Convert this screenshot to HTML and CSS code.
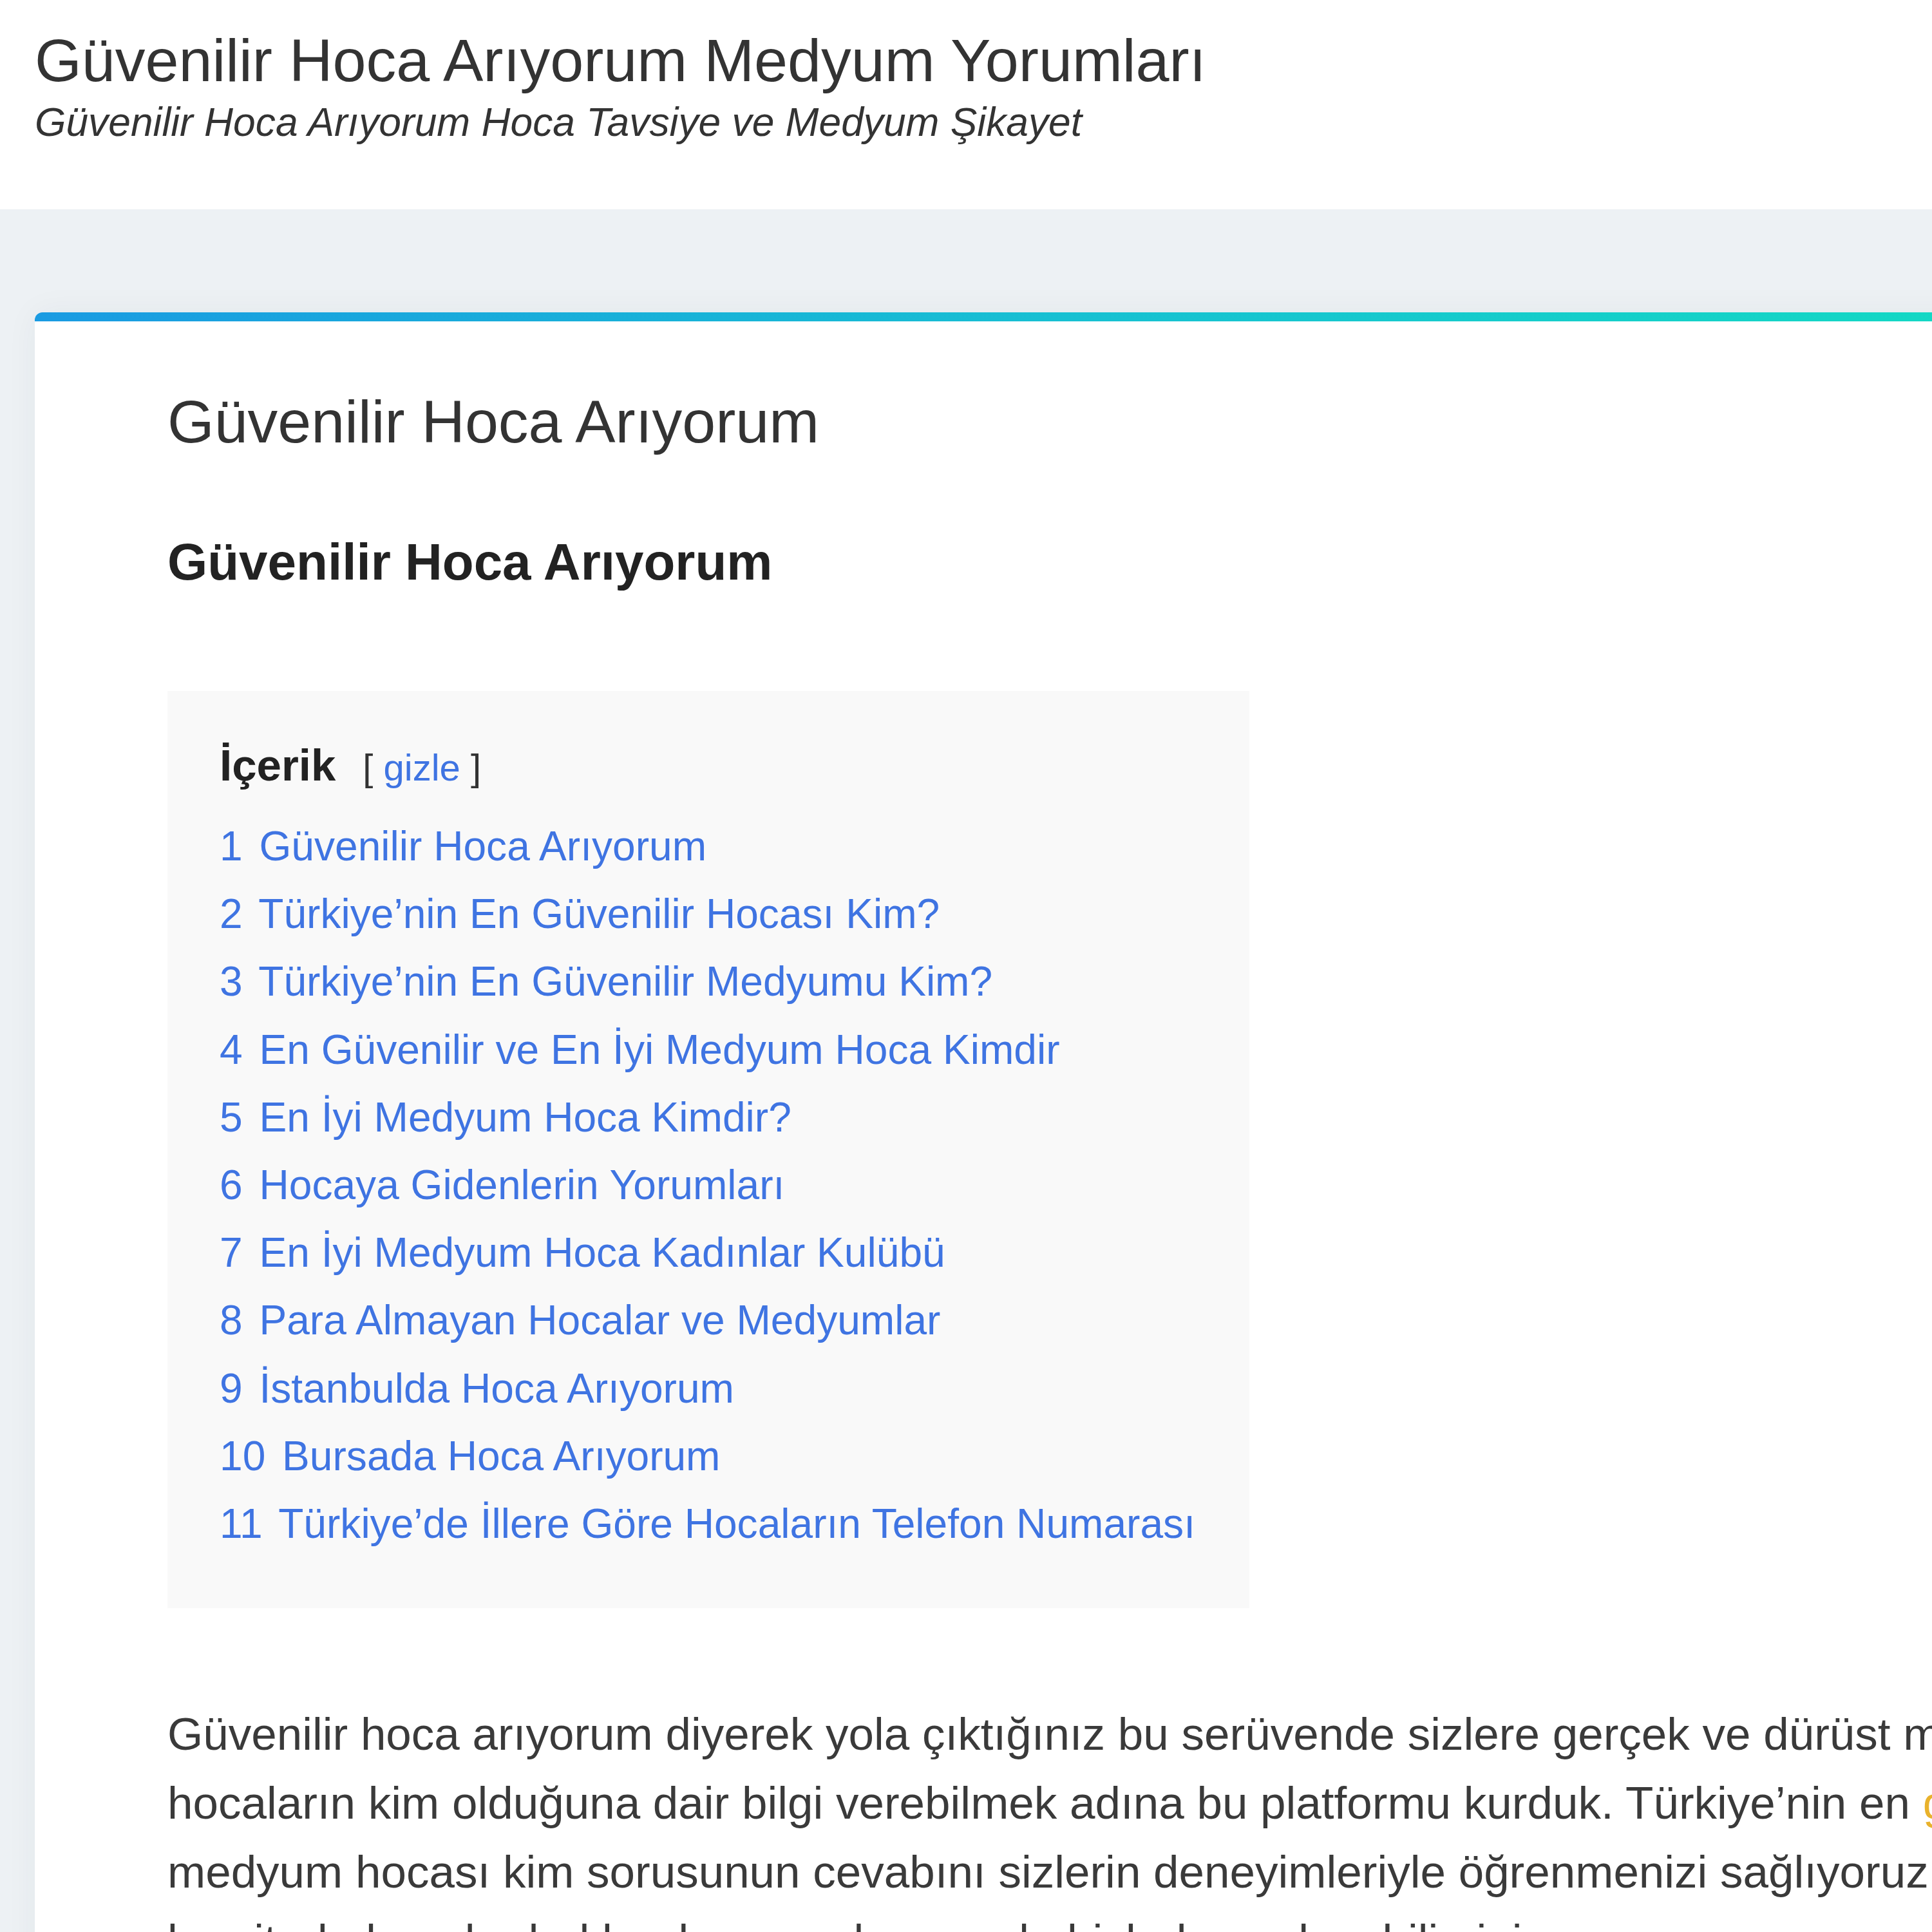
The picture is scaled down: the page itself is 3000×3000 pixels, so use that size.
FILE: index.html
```html
<!DOCTYPE html>
<html lang="tr">
<head>
<meta charset="utf-8">
<title>Güvenilir Hoca Arıyorum Medyum Yorumları</title>
<link rel="stylesheet" href="styles.css">
</head>
<body>
<header class="site-header">
  <p class="site-title">Güvenilir Hoca Arıyorum Medyum Yorumları</p>
  <p class="site-desc">Güvenilir Hoca Arıyorum Hoca Tavsiye ve Medyum Şikayet</p>
</header>
<main class="main">
  <article class="card">
    <h1 class="entry-title">Güvenilir Hoca Arıyorum</h1>
    <h2 class="section-title">Güvenilir Hoca Arıyorum</h2>
    <nav class="toc">
      <p class="toc-title">İçerik<span class="toc-toggle">[ <a href="#">gizle</a> ]</span></p>
      <ul class="toc-list">
        <li><a href="#"><span class="toc-num">1</span> Güvenilir Hoca Arıyorum</a></li>
        <li><a href="#"><span class="toc-num">2</span> Türkiye’nin En Güvenilir Hocası Kim?</a></li>
        <li><a href="#"><span class="toc-num">3</span> Türkiye’nin En Güvenilir Medyumu Kim?</a></li>
        <li><a href="#"><span class="toc-num">4</span> En Güvenilir ve En İyi Medyum Hoca Kimdir</a></li>
        <li><a href="#"><span class="toc-num">5</span> En İyi Medyum Hoca Kimdir?</a></li>
        <li><a href="#"><span class="toc-num">6</span> Hocaya Gidenlerin Yorumları</a></li>
        <li><a href="#"><span class="toc-num">7</span> En İyi Medyum Hoca Kadınlar Kulübü</a></li>
        <li><a href="#"><span class="toc-num">8</span> Para Almayan Hocalar ve Medyumlar</a></li>
        <li><a href="#"><span class="toc-num">9</span> İstanbulda Hoca Arıyorum</a></li>
        <li><a href="#"><span class="toc-num">10</span> Bursada Hoca Arıyorum</a></li>
        <li><a href="#"><span class="toc-num">11</span> Türkiye’de İllere Göre Hocaların Telefon Numarası</a></li>
      </ul>
    </nav>
    <p class="intro">Güvenilir hoca arıyorum diyerek yola çıktığınız bu serüvende sizlere gerçek ve dürüst medyum<br>hocaların kim olduğuna dair bilgi verebilmek adına bu platformu kurduk. Türkiye’nin en <a class="hl" href="#">güvenilir hoca</a><br>medyum hocası kim sorusunun cevabını sizlerin deneyimleriyle öğrenmenizi sağlıyoruz.<br>bu sitede hocalar hakkında yorumlarınızı da bizlerle paylaşabilirsiniz.</p>
  </article>
</main>
</body>
</html>
```
FILE: styles.css
```css
html, body {
  margin: 0;
  padding: 0;
  overflow: hidden;
}

body {
  font-family: "Liberation Sans", Arial, sans-serif;
  background: #edf1f4;
  color: #333;
  width: 3000px;
  height: 3000px;
}

.site-header {
  background: #fff;
  height: 325px;
  box-sizing: border-box;
  padding: 38px 54px 0;
}

.site-title {
  margin: 0;
  font-size: 93.5px;
  line-height: 111px;
  color: #333;
}

.site-desc {
  margin: 4px 0 0;
  font-size: 62.3px;
  line-height: 74px;
  font-style: italic;
  color: #333;
}

.main {
  padding: 160px 0 0 54px;
}

.card {
  width: 3200px;
  box-sizing: border-box;
  padding: 114px 0 0 206px;
  height: 2600px;
  background:
    linear-gradient(90deg, #1a9be2 0%, #17c0d2 50%, #13dcc2 100%) top left / 100% 14px no-repeat,
    #fff;
  border-radius: 12px 12px 0 0;
  box-shadow: 0 0 50px rgba(30, 50, 70, 0.05);
}

.entry-title {
  margin: 0;
  font-size: 93.4px;
  line-height: 111px;
  font-weight: normal;
  color: #333;
}

.section-title {
  margin: 115px 0 0;
  font-size: 80px;
  line-height: 95px;
  font-weight: bold;
  color: #222;
}

.toc {
  display: table;
  margin-top: 153px;
  background: #f9f9f9;
  padding: 71px 84px 78px 81px;
}

.toc-title {
  margin: 0;
  font-size: 69px;
  line-height: 90px;
  font-weight: bold;
  color: #222;
}

.toc-toggle {
  font-size: 58px;
  line-height: 1;
  font-weight: normal;
  color: #333;
  margin-left: 42px;
}

.toc-toggle a {
  color: #3f74e2;
  text-decoration: none;
}

.toc-list {
  list-style: none;
  margin: 28px 0 0;
  padding: 0;
  font-size: 64.1px;
  line-height: 105.2px;
}

.toc-list a {
  color: #3f74e2;
  text-decoration: none;
}

.toc-num {
  margin-right: 8px;
}

.intro {
  margin: 142px 0 0;
  font-size: 71px;
  line-height: 107px;
  color: #3a3a3a;
  white-space: nowrap;
}

.intro .hl {
  color: #e9b22c;
  text-decoration: none;
}
```
